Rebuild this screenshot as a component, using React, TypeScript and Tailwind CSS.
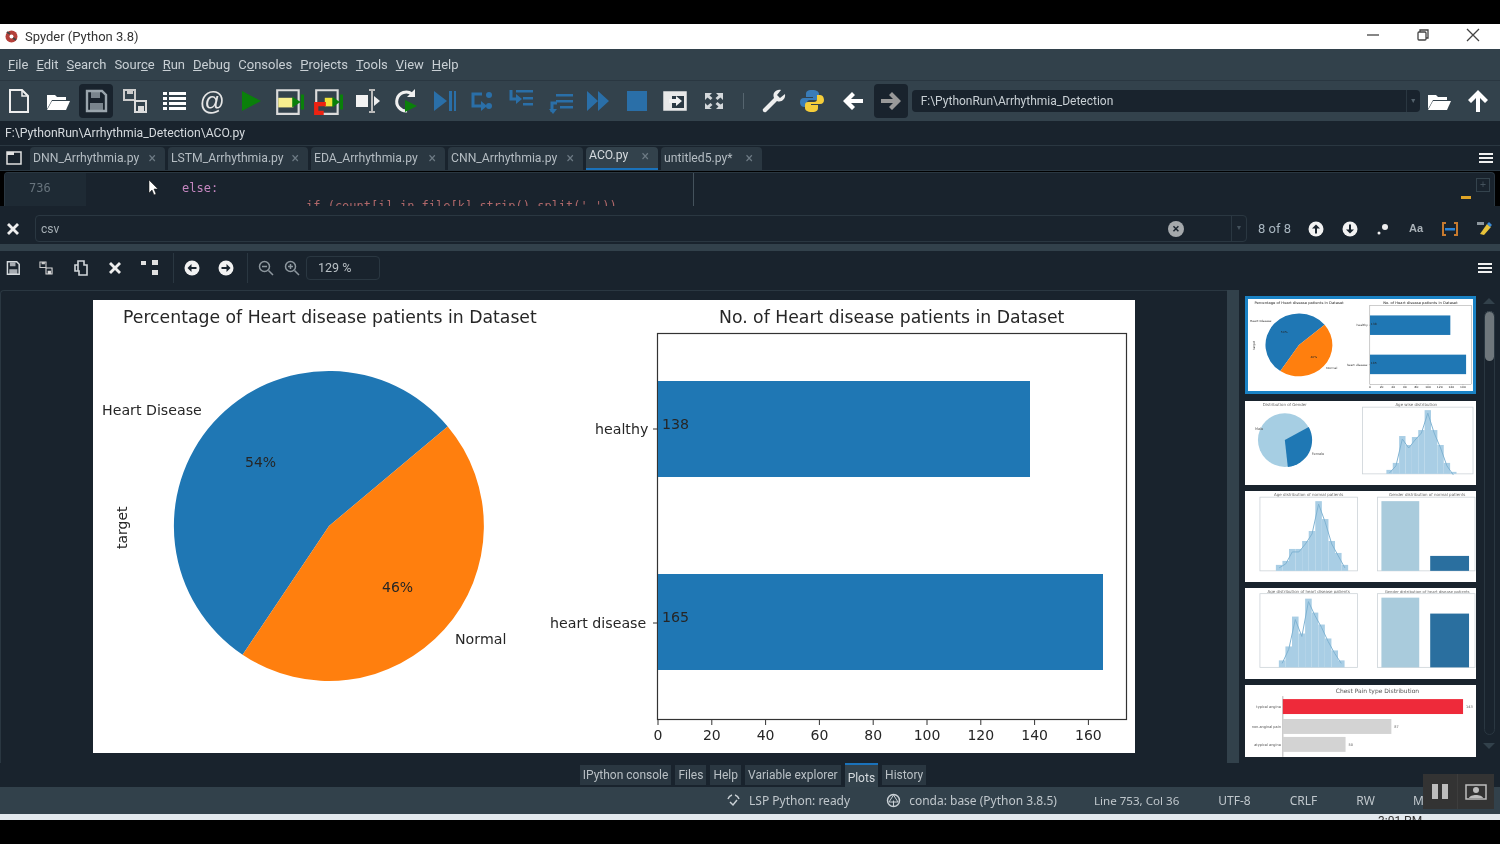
import React from 'react';

const tabs = [
  { name: 'DNN_Arrhythmia.py', w: 'w-[135px]' },
  { name: 'LSTM_Arrhythmia.py', w: 'w-[140px]' },
  { name: 'EDA_Arrhythmia.py', w: 'w-[134px]' },
  { name: 'CNN_Arrhythmia.py', w: 'w-[135px]' },
  { name: 'ACO.py', w: 'w-[72px]', active: true },
  { name: 'untitled5.py*', w: 'w-[101px]' },
];

const menus = [
  ['', 'F', 'ile'],
  ['', 'E', 'dit'],
  ['', 'S', 'earch'],
  ['Sour', 'c', 'e'],
  ['', 'R', 'un'],
  ['', 'D', 'ebug'],
  ['C', 'o', 'nsoles'],
  ['', 'P', 'rojects'],
  ['', 'T', 'ools'],
  ['', 'V', 'iew'],
  ['', 'H', 'elp'],
];

const Svg = ({ children, size = 28, viewBox = '0 0 28 28' }: { children: React.ReactNode; size?: number; viewBox?: string }) => (
  <svg width={size} height={size} viewBox={viewBox} fill="none">
    {children}
  </svg>
);

const FolderOpen = () => (
  <Svg>
    <path d="M3 8h8l2 2h9v3H8L3 22z" fill="#fff" />
    <path d="M8 14h18l-4 9H3z" fill="#fff" />
  </Svg>
);
const NewFile = () => (
  <Svg>
    <path d="M5 3h12l6 6v16H5z" stroke="#eee" strokeWidth="2" />
    <path d="M17 3v6h6" stroke="#eee" strokeWidth="1.500" />
  </Svg>
);
const Save = ({ color = '#9aa5ad' }: { color?: string }) => (
  <Svg>
    <path d="M5 4h15l4 4v16H5z" stroke={color} strokeWidth="2.400" />
    <path d="M9 5h9v6H9zM8 16h13v8H8z" fill={color} opacity="0.75" />
  </Svg>
);
const SaveAll = () => (
  <Svg>
    <path d="M3 3h11v10H3z" stroke="#ccc" strokeWidth="2" />
    <path d="M6 3h6v4H6z" fill="#ccc" />
    <path d="M14 14h11v11H14z" stroke="#ddd" strokeWidth="2" />
    <path d="M17 19h6v6h-6z" fill="#ddd" />
  </Svg>
);
const ListIcon = () => (
  <Svg>
    <path d="M3 5h4v3H3zM9 5h17v3H9zM3 10h4v3H3zM9 10h17v3H9zM3 15h4v3H3zM9 15h17v3H9zM3 20h4v3H3zM9 20h17v3H9z" fill="#fff" />
  </Svg>
);
const AtIcon = () => <span className="font-['Liberation_Sans',sans-serif] text-[25px] leading-none text-[#e6e6e6]">@</span>;
const Run = () => (
  <Svg>
    <path d="M5 4l19 10L5 24z" fill="#0a800a" />
  </Svg>
);
const RunCell = () => (
  <Svg size={30} viewBox="2 0 28 28">
    <path d="M5 4h20v22H5z" stroke="#dcdcdc" strokeWidth="2" />
    <path d="M6 11h14v9H6z" fill="#f7ee8e" />
    <path d="M19 10l8 5-8 5zM27 8h3v14h-3z" fill="#0a800a" />
  </Svg>
);
const RunCellAdv = () => (
  <Svg size={30} viewBox="2 0 28 28">
    <path d="M5 4h20v22H5z" stroke="#dcdcdc" strokeWidth="2" />
    <path d="M13 11h8v8h-8z" fill="#f0e33a" />
    <path d="M20 10l7 5-7 5zM27 8h3v14h-3z" fill="#0a800a" />
    <path d="M14 17H5v8h7" stroke="#ee2211" strokeWidth="4" />
  </Svg>
);
const RunSelection = () => (
  <Svg>
    <path d="M3 8h12v12H3z" fill="#f2f2f2" />
    <path d="M19 3v22M16 3h6M16 25h6" stroke="#bbb" strokeWidth="2" />
    <path d="M21 9l6 5-6 5z" fill="#eee" />
  </Svg>
);
const Reload = () => (
  <Svg>
    <path d="M21 7a9.500 9.500 0 1 0-5 17" stroke="#f0f0f0" strokeWidth="3" />
    <path d="M24 2v8h-8z" fill="#f0f0f0" />
    <path d="M14 13l12 6-12 6z" fill="#0a800a" />
  </Svg>
);
const DebugStep = () => (
  <Svg>
    <path d="M4 4l13 10L4 24z" fill="#2a6fa8" />
    <path d="M19 4h3v20h-3zM24 4h2v20h-2z" fill="#2a6fa8" />
  </Svg>
);
const StepOver = () => (
  <Svg>
    <path d="M14 7H5v12h9" stroke="#2a6fa8" strokeWidth="3" />
    <path d="M13 14l6 5-6 5z" fill="#2a6fa8" />
    <circle cx="21" cy="8" r="3" fill="#2a6fa8" />
    <circle cx="21" cy="19" r="3" fill="#2a6fa8" />
  </Svg>
);
const StepIn = () => (
  <Svg>
    <path d="M4 3v9h6" stroke="#2a6fa8" strokeWidth="3" />
    <path d="M9 7l6 5-6 5z" fill="#2a6fa8" />
    <path d="M9 3h17v2.500H9zM16 10h10v2.500H16zM16 16h10v2.500H16z" fill="#2a6fa8" />
  </Svg>
);
const StepOut = () => (
  <Svg>
    <path d="M6 25v-9h5" stroke="#2a6fa8" strokeWidth="3" />
    <path d="M3 22l4 5 4-5z" fill="#2a6fa8" />
    <path d="M10 7h17v2.500H10zM10 13h17v2.500H10zM14 19h13v2.500H14z" fill="#2a6fa8" />
  </Svg>
);
const Continue = () => (
  <Svg>
    <path d="M3 4l11 10L3 24zM14 4l11 10-11 10z" fill="#2a6fa8" />
  </Svg>
);
const Stop = () => (
  <Svg>
    <path d="M4 4h20v20H4z" fill="#2a6fa8" />
  </Svg>
);
const Maximize = () => (
  <Svg>
    <path d="M3 5h22v18H3z" fill="#e8e8e8" stroke="#e8e8e8" strokeWidth="1.500" />
    <path d="M11 9h12v12H11z" fill="#2b3943" />
    <path d="M8 12h7V9l6 5-6 5v-3H8z" fill="#f2f2f2" />
  </Svg>
);
const Fullscreen = () => (
  <Svg>
    <path d="M5 6h7l-2.500 2.500 3 2.500-2 2-3-2.500L5 13zM23 6v7l-2.500-2.500-3 2.500-2-2 3-2.500L16 6zM5 22v-6l2.500 2.500 3-2.500 2 2-3 2.500L12 22zM23 22h-7l2.500-2.500-3-2.500 2-2 3 2.500L23 16z" fill="#d4d8db" />
  </Svg>
);
const Wrench = () => (
  <Svg>
    <path d="M25 7l-5 4-3-3 4-5c-5-1-9 3-7 8L3 22c-1 2 1 4 3 3l11-11c4 2 9-2 8-7z" fill="#eee" />
  </Svg>
);
const PythonLogo = () => (
  <Svg>
    <path d="M14 3c-5 0-6 2-6 4v3h7v1H6c-3 0-4 2-4 4s1 5 4 5h3v-4c0-2 1-3 3-3h6c2 0 3-1 3-3V7c0-2-2-4-7-4z" fill="#3a7cb8" />
    <path d="M14 25c5 0 6-2 6-4v-3h-7v-1h9c3 0 4-2 4-4s-1-5-4-5h-3v4c0 2-1 3-3 3H10c-2 0-3 1-3 3v3c0 2 2 4 7 4z" fill="#f5cd3a" />
  </Svg>
);
const ArrowLeft = () => (
  <Svg>
    <path d="M13 5l3 3-4 4h12v4H12l4 4-3 3-9-9z" fill="#fff" />
  </Svg>
);
const ArrowRight = () => (
  <Svg>
    <path d="M15 5l-3 3 4 4H4v4h12l-4 4 3 3 9-9z" fill="#999" />
  </Svg>
);
const ArrowUp = () => (
  <Svg>
    <path d="M14 3l10 10-3 3-5-5v14h-4V11l-5 5-3-3z" fill="#fff" />
  </Svg>
);

const toolbarIcons: { icon: React.ReactNode; active?: boolean }[] = [
  { icon: <NewFile /> },
  { icon: <FolderOpen /> },
  { icon: <Save />, active: true },
  { icon: <SaveAll /> },
  { icon: <ListIcon /> },
  { icon: <AtIcon /> },
  { icon: <Run /> },
  { icon: <RunCell /> },
  { icon: <RunCellAdv /> },
  { icon: <RunSelection /> },
  { icon: <Reload /> },
  { icon: <DebugStep /> },
  { icon: <StepOver /> },
  { icon: <StepIn /> },
  { icon: <StepOut /> },
  { icon: <Continue /> },
  { icon: <Stop /> },
  { icon: <Maximize /> },
  { icon: <Fullscreen /> },
];

const ToolBtn = ({ children, active }: { children: React.ReactNode; active?: boolean }) => (
  <div className={`flex h-[34px] w-[34px] mx-[2.300px] shrink-0 items-center justify-center rounded ${active ? 'bg-[#19232d]' : ''}`}>
    {children}
  </div>
);

const Hamburger = () => (
  <svg width="16" height="14" viewBox="0 0 16 14">
    <path d="M1 2h14v2H1zM1 6h14v2H1zM1 10h14v2H1z" fill="#f0f0f0" />
  </svg>
);

const SmallIcon = ({ d, fill = '#eee', stroke }: { d: string; fill?: string; stroke?: string }) => (
  <svg width="18" height="18" viewBox="0 0 18 18">
    <path d={d} fill={stroke ? 'none' : fill} stroke={stroke} strokeWidth={stroke ? 1.6 : 0} />
  </svg>
);

const Cross = () => <SmallIcon d="M3 5l2-2 4 4 4-4 2 2-4 4 4 4-2 2-4-4-4 4-2-2 4-4z" />;

const CircleArrow = ({ dir }: { dir: 'left' | 'right' | 'up' | 'down' }) => {
  const rot = { left: 180, right: 0, up: -90, down: 90 }[dir];
  return (
    <svg width="16" height="16" viewBox="0 0 16 16">
      <circle cx="8" cy="8" r="7.500" fill="#f2f2f2" />
      <path d="M3.500 7h5V4l4 4-4 4V9h-5z" fill="#19232d" transform={`rotate(${rot} 8 8)`} />
    </svg>
  );
};

const Zoom = ({ plus }: { plus?: boolean }) => (
  <svg width="16" height="16" viewBox="0 0 16 16" fill="none" stroke="#8d979e" strokeWidth="1.500">
    <circle cx="6.500" cy="6.500" r="5" />
    <path d="M10.500 10.500l4.500 4.500M4 6.500h5" />
    {plus && <path d="M6.500 4v5" />}
  </svg>
);

// main figure: pie on the left, horizontal bars on the right
const PlotOne = ({ className }: { className: string }) => {
  const ticks = [0, 20, 40, 60, 80, 100, 120, 140, 160];
  return (
    <svg viewBox="0 0 1042 453" preserveAspectRatio="none" className={className} fontFamily="'DejaVu Sans', sans-serif" fill="#262626">
      <rect width="1042" height="453" fill="#fff" />
      <text x="30" y="23" fontSize="17.250">Percentage of Heart disease patients in Dataset</text>
      <path d="M236 226L354.700 126.400A155 155 0 1 0 149.600 354.700Z" fill="#1f77b4" />
      <path d="M236 226L354.700 126.400A155 155 0 0 1 149.600 354.700Z" fill="#ff7f0e" />
      <text x="9" y="115" fontSize="14.200">Heart Disease</text>
      <text x="362" y="344" fontSize="14.200">Normal</text>
      <text x="152" y="167" fontSize="14">54%</text>
      <text x="289" y="292" fontSize="14">46%</text>
      <text transform="translate(34 249) rotate(-90)" fontSize="14">target</text>
      <text x="626" y="23" fontSize="17.250">No. of Heart disease patients in Dataset</text>
      <rect x="564.500" y="33.500" width="469" height="386" fill="none" stroke="#333" strokeWidth="1.200" />
      <rect x="565" y="81" width="372" height="96" fill="#1f77b4" />
      <rect x="565" y="274" width="445" height="96" fill="#1f77b4" />
      <text x="569" y="129" fontSize="14.200">138</text>
      <text x="569" y="322" fontSize="14.200">165</text>
      <text x="502" y="134" fontSize="14.200">healthy</text>
      <text x="457" y="328" fontSize="14.200">heart disease</text>
      <path d="M560 129h5M560 323h5" stroke="#333" />
      {ticks.map((t, i) => {
        const x = 565 + i * 53.8;
        return (
          <g key={t}>
            <path d={`M${x} 420v5`} stroke="#333" />
            <text x={x} y="440" fontSize="14" textAnchor="middle">{t}</text>
          </g>
        );
      })}
    </svg>
  );
};

const kdeBars = (x0: number, w: number, base: number, tops: number[]) =>
  tops.map((t, i) => <rect key={i} x={x0 + i * w} y={t} width={w} height={base - t} fill="#a9cee5" />);

const kdeLine = (x0: number, w: number, tops: number[]) =>
  tops.map((t, i) => `${i ? 'L' : 'M'}${x0 + i * w + w / 2} ${t}`).join(' ');

const Thumb = ({ h, children, selected }: { h: string; children: React.ReactNode; selected?: boolean }) => (
  <div className={`w-[231px] shrink-0 bg-white ${h} ${selected ? 'border-[3px] border-[#1a82c4]' : ''}`}>
    {children}
  </div>
);

const Hist = ({ x, w, base, top, tops, bw, x0, title, titleX, height }: { x: number; w: number; base: number; top: number; tops: number[]; bw: number; x0: number; title: string; titleX: number; height: number }) => (
  <g>
    <text x={titleX} y={top - 1} fontSize="4" textAnchor="middle" fill="#666">{title}</text>
    <rect x={x} y={top} width={w} height={height} fill="none" stroke="#ccd3d8" strokeWidth="0.800" />
    {kdeBars(x0, bw, base, tops)}
    <path d={kdeLine(x0, bw, tops.map((t) => t + 3))} fill="none" stroke="#7fb2d2" strokeWidth="1" />
  </g>
);

const ThumbTwo = () => (
  <svg viewBox="0 0 232 84" className="block h-full w-full" fontFamily="'DejaVu Sans', sans-serif">
    <text x="40" y="5" fontSize="4" textAnchor="middle" fill="#666">Distribution of Gender</text>
    <circle cx="40" cy="39" r="27" fill="#a6cee3" />
    <path d="M40 39L64 26A27 27 0 0 1 43 66Z" fill="#1f78b4" />
    <text x="10" y="29" fontSize="3.500" fill="#555">Male</text>
    <text x="67" y="54" fontSize="3.500" fill="#555">Female</text>
    <Hist x={118} w={111} base={73} top={6} height={67} bw={6.4} x0={142} tops={[69, 62, 35, 44, 36, 29, 9, 29, 44, 62, 71]} title="Age wise distribution" titleX={172} />
  </svg>
);

const ThumbThree = () => (
  <svg viewBox="0 0 232 91" className="block h-full w-full" fontFamily="'DejaVu Sans', sans-serif">
    <Hist x={15} w={98} base={80} top={6} height={74} bw={6.6} x0={31} tops={[74, 70, 58, 58, 50, 40, 10, 28, 50, 62, 74]} title="Age distribution of normal patients" titleX={64} />
    <text x={183} y={5} fontSize="4" textAnchor="middle" fill="#666">Gender distribution of normal patients</text>
    <rect x="133" y="6" width="98" height="74" fill="none" stroke="#ccd3d8" strokeWidth="0.800" />
    <rect x="137" y="10" width="38" height="70" fill="#a9cbdc" />
    <rect x="186" y="65" width="39" height="15" fill="#2a6f9f" />
  </svg>
);

const ThumbFour = () => (
  <svg viewBox="0 0 232 90" className="block h-full w-full" fontFamily="'DejaVu Sans', sans-serif">
    <Hist x={15} w={98} base={79} top={5} height={74} bw={6.6} x0={34} tops={[72, 58, 28, 45, 10, 24, 36, 50, 62, 72]} title="Age distribution of heart disease patients" titleX={64} />
    <text x={183} y={4} fontSize="3.800" textAnchor="middle" fill="#666">Gender distribution of heart disease patients</text>
    <rect x="133" y="5" width="98" height="74" fill="none" stroke="#ccd3d8" strokeWidth="0.800" />
    <rect x="137" y="9" width="38" height="70" fill="#a9cbdc" />
    <rect x="186" y="25" width="39" height="54" fill="#2a6f9f" />
  </svg>
);

const ThumbFive = () => (
  <svg viewBox="0 0 232 72" className="block h-full w-full" fontFamily="'DejaVu Sans', sans-serif">
    <text x="133" y="8" fontSize="6" textAnchor="middle" fill="#555">Chest Pain type Distribution</text>
    <path d="M38 11v61" stroke="#666" strokeWidth="0.500" />
    <rect x="38" y="14" width="181" height="15" fill="#ee2a3a" />
    <rect x="38" y="34" width="109" height="15" fill="#d3d3d3" />
    <rect x="38" y="52" width="63" height="15" fill="#d3d3d3" />
    <text x="36" y="23" fontSize="3.500" textAnchor="end" fill="#555">typical angina</text>
    <text x="36" y="43" fontSize="3.500" textAnchor="end" fill="#555">non-anginal pain</text>
    <text x="36" y="61" fontSize="3.500" textAnchor="end" fill="#555">atypical angina</text>
    <text x="222" y="23" fontSize="3.500" fill="#555">143</text>
    <text x="150" y="43" fontSize="3.500" fill="#555">87</text>
    <text x="104" y="61" fontSize="3.500" fill="#555">50</text>
  </svg>
);

const bottomTabs = ['IPython console', 'Files', 'Help', 'Variable explorer', 'Plots', 'History'];

const App = () => {
  return (
    <div className="relative flex h-[844px] w-[1500px] flex-col overflow-hidden bg-black font-['Roboto',sans-serif] text-[13px] text-[#d5dade] blur-[0.4px]">
      <div className="h-[24px] shrink-0 bg-black" />

      {/* title bar */}
      <div className="flex h-[25px] shrink-0 items-center bg-white text-[#333]">
        <svg className="ml-[4px]" width="15" height="15" viewBox="0 0 15 15">
          <circle cx="7.500" cy="7.500" r="6" fill="#b5403a" />
          <circle cx="7.500" cy="7.500" r="2" fill="#fff" />
          <path d="M3 3l3 2M12 11l-3-2" stroke="#444" strokeWidth="2" />
        </svg>
        <span className="ml-[6px] text-[13px]">Spyder (Python 3.8)</span>
        <div className="ml-auto mr-[20px] flex -translate-y-[2px] items-center gap-[36px]">
          <svg width="14" height="14" viewBox="0 0 14 14"><path d="M1 7h12" stroke="#444" strokeWidth="1.300" /></svg>
          <svg width="14" height="14" viewBox="0 0 14 14" fill="none" stroke="#444" strokeWidth="1.300"><rect x="2" y="4" width="8" height="8" rx="1" /><path d="M4 4V2h8v8h-2" /></svg>
          <svg width="14" height="14" viewBox="0 0 14 14"><path d="M1 1l12 12M13 1L1 13" stroke="#444" strokeWidth="1.300" /></svg>
        </div>
      </div>

      {/* menu bar */}
      <div className="flex h-[32px] shrink-0 items-center gap-[8px] border-b border-[#2a3741] bg-[#32414b] pl-[8px] text-[13px] text-[#c9d0d5]">
        {menus.map((m) => (
          <span key={m.join('')}>
            {m[0]}<u>{m[1]}</u>{m[2]}
          </span>
        ))}
      </div>

      {/* main toolbar */}
      <div className="flex h-[40px] shrink-0 items-center bg-[#33424c]">
        {toolbarIcons.map((t, i) => (
          <ToolBtn key={i} active={t.active}>{t.icon}</ToolBtn>
        ))}
        <div className="ml-[10px] mr-[10px] h-[16px] w-px bg-[#56656f]" />
        <ToolBtn><Wrench /></ToolBtn>
        <ToolBtn><PythonLogo /></ToolBtn>
        <div className="ml-[2px]"><ToolBtn><ArrowLeft /></ToolBtn></div>
        <ToolBtn active><ArrowRight /></ToolBtn>
        <div className="ml-[1px] flex h-[22px] w-[508px] shrink-0 items-center rounded-sm bg-[#19232d] pl-[9px] text-[12px] text-[#c9d0d5]">
          F:\PythonRun\Arrhythmia_Detection
          <div className="ml-auto flex h-full w-[14px] items-center justify-center border-l border-[#2a3741] text-[7px] text-[#54626c]">▼</div>
        </div>
        <div className="flex"><ToolBtn><FolderOpen /></ToolBtn><ToolBtn><ArrowUp /></ToolBtn></div>
      </div>

      {/* file path */}
      <div className="flex h-[24px] shrink-0 items-center bg-[#19232d] pl-[5px] text-[12.200px] text-[#d5dade]">
        F:\PythonRun\Arrhythmia_Detection\ACO.py
      </div>

      {/* editor tabs */}
      <div className="flex h-[26px] shrink-0 items-center border-t border-b border-[#2a3741] bg-[#19232d]">
        <div className="flex w-[27px] justify-center">
          <svg width="16" height="14" viewBox="0 0 16 14" fill="none"><path d="M1 1h14v12H1z" stroke="#e0e0e0" strokeWidth="1.500" /><path d="M1 1h7v3H1z" fill="#e0e0e0" /></svg>
        </div>
        <div className="ml-[3px] flex gap-[3px]">
          {tabs.map((t) => (
            <div
              key={t.name}
              className={`flex h-[23px] items-center justify-between rounded-t-sm pl-[3px] pr-[9px] text-[12.200px] ${t.w} ${t.active ? 'border-b-2 border-[#1a72bb] bg-[#33424c] pb-[3px] text-[#d5dade]' : 'bg-[#2a3741] text-[#b4bcc2]'}`}
            >
              <span>{t.name}</span>
              <span className="text-[14px] leading-none text-[#6d7a84]">×</span>
            </div>
          ))}
        </div>
        <div className="ml-auto mr-[6px]"><Hamburger /></div>
      </div>

      {/* editor, one and a bit lines visible */}
      <div className="mt-[1px] ml-[4px] mr-[5px] flex h-[34px] shrink-0 overflow-hidden rounded-t border-l border-r border-t border-[#2a3741] bg-[#19232d] font-['DejaVu_Sans_Mono',monospace] text-[12px] leading-[18px]">
        <div className="h-full w-[81px] shrink-0 bg-[#1e2a34] pl-[24px] pt-[6px] text-[#68747d]">736</div>
        <div className="h-full w-[608px] shrink-0 whitespace-nowrap border-r border-[#44525c] pl-[96px] pt-[6px]">
          <div className="text-[#c586c0]">else:</div>
          <div className="pl-[124px] text-[#b0686a]">if (count[i] in file[k].strip().split(','))</div>
        </div>
        <div className="ml-auto mr-[4px] flex items-start gap-[5px] pt-[5px]">
          <div className="mt-[18px] h-[3px] w-[10px] bg-[#e0a526]" />
          <div className="flex h-[14px] w-[14px] items-center justify-center border border-[#34434d] text-[10px] leading-none text-[#44525c]">+</div>
        </div>
      </div>

      {/* find bar */}
      <div className="flex h-[38px] shrink-0 items-center bg-[#19232d] pt-[7px]">
        <div className="ml-[4px]"><Cross /></div>
        <div className="ml-[13px] flex h-[27px] w-[1212px] shrink-0 items-center rounded-[4px] border border-[#2a3741] pl-[5px] text-[12px] text-[#a6afb5]">
          csv
          <div className="ml-auto mr-[47px] flex h-[16px] w-[16px] items-center justify-center rounded-full bg-[#a5a9ac] text-[13px] font-bold leading-none text-[#19232d]">×</div>
          <div className="flex h-full w-[15px] items-center justify-center border-l border-[#2a3741] text-[7px] text-[#44525c]">▼</div>
        </div>
        <span className="ml-[11px] w-[32px] shrink-0 whitespace-nowrap text-[13px] text-[#a9b6c0]">8 of 8</span>
        <div className="ml-[18px]"><CircleArrow dir="up" /></div>
        <div className="ml-[18px]"><CircleArrow dir="down" /></div>
        <svg className="ml-[19px]" width="12" height="12" viewBox="0 0 12 12"><circle cx="8" cy="4" r="3" fill="#eee" /><circle cx="2" cy="10" r="1.500" fill="#eee" /></svg>
        <span className="ml-[20px] font-['Liberation_Sans',sans-serif] text-[11px] font-bold text-[#aab2b8]">Aa</span>
        <svg className="ml-[18px]" width="18" height="14" viewBox="0 0 18 14" fill="none"><path d="M5 1H2v12h3M13 1h3v12h-3" stroke="#c77a2e" strokeWidth="2" /><path d="M4 6h10v2.500H4z" fill="#2a84d8" /></svg>
        <svg className="ml-[17px]" width="16" height="16" viewBox="0 0 16 16"><path d="M1 1h7v3H1z" fill="#8d979e" /><path d="M11 3l4 3-7 8-4-1z" fill="#e8c23a" /><path d="M13 1l3 3-2 2-3-3z" fill="#3b8ad6" /></svg>
      </div>

      <div className="h-[7px] shrink-0 bg-[#32414b]" />

      {/* plots toolbar */}
      <div className="flex h-[39px] shrink-0 items-center bg-[#19232d] pb-[5px]">
        <div className="ml-[-1px] flex scale-[0.62] items-center justify-center"><Save color="#d5dade" /></div>
        <div className="ml-[5px] flex scale-[0.55] items-center justify-center"><SaveAll /></div>
        <div className="ml-[12px]"><SmallIcon d="M6 2h6v4h3v10H7v-4H3V6h3zM6 6v6" stroke="#d0d5d9" /></div>
        <div className="ml-[16px]"><Cross /></div>
        <div className="ml-[16px]">
          <svg width="19" height="18" viewBox="0 0 19 18"><path d="M1 2h5v4H1zM12 1h6v5h-6zM12 11h6v5h-6z" fill="#e0e0e0" /></svg>
        </div>
        <div className="ml-[14px] h-[30px] w-px bg-[#2a3741]" />
        <div className="ml-[10px]"><CircleArrow dir="left" /></div>
        <div className="ml-[18px]"><CircleArrow dir="right" /></div>
        <div className="ml-[13px] h-[30px] w-px bg-[#2a3741]" />
        <div className="ml-[10px]"><Zoom /></div>
        <div className="ml-[10px]"><Zoom plus /></div>
        <div className="ml-[6px] flex h-[24px] w-[74px] shrink-0 items-center rounded border border-[#2a3741] pl-[11px] text-[12.500px] text-[#b9c0c5]">129 %</div>
        <div className="ml-auto mr-[7px]"><Hamburger /></div>
      </div>

      {/* plots pane */}
      <div className="flex h-[473px] shrink-0 bg-[#19232d]">
        <div className="h-full w-[1227px] shrink-0 rounded-tl border-t border-l border-[#2a3741] pl-[92px] pt-[9px]">
          <PlotOne className="block h-[453px] w-[1042px]" />
        </div>
        <div className="h-full w-[12px] shrink-0 bg-[#32414b]" />
        <div className="flex h-full flex-1">
          <div className="flex w-[243px] shrink-0 flex-col gap-[6px] pl-[6px] pt-[6px]">
            <Thumb h="mb-[1px] h-[98px]" selected>
              <PlotOne className="block h-full w-full" />
            </Thumb>
            <Thumb h="h-[84px]"><ThumbTwo /></Thumb>
            <Thumb h="h-[91px]"><ThumbThree /></Thumb>
            <Thumb h="h-[91px]"><ThumbFour /></Thumb>
            <Thumb h="h-[72px]"><ThumbFive /></Thumb>
          </div>
          <div className="flex w-[14px] shrink-0 flex-col items-center">
            <svg className="mt-[8px]" width="12" height="6" viewBox="0 0 12 6"><path d="M6 0l6 6H0z" fill="#32414b" /></svg>
            <div className="mt-[7px] h-[50px] w-[9px] rounded-full bg-[#6f777c]" />
            <div className="mt-[-50px] h-[424px] w-[11px] rounded-full border border-[#2a3741]" />
            <svg className="mt-[8px]" width="12" height="6" viewBox="0 0 12 6"><path d="M0 0h12L6 6z" fill="#32414b" /></svg>
          </div>
        </div>
      </div>

      {/* pane tabs */}
      <div className="flex h-[24px] shrink-0 items-end justify-center gap-[4px] bg-[#19232d] pl-[6px] text-[12px]">
        {bottomTabs.map((t) => (
          <div
            key={t}
            className={`flex items-center px-[3px] ${t === 'Plots' ? 'h-[24px] border-t-2 border-[#1a72bb] bg-[#33424c] pt-[3px] text-[#d5dade]' : 'mb-[2px] h-[20px] bg-[#2a3741] text-[#b9c0c5]'}`}
          >
            {t}
          </div>
        ))}
      </div>

      {/* status bar */}
      <div className="flex h-[27px] shrink-0 items-center overflow-hidden bg-[#32414b] pl-[726px] font-['Noto_Sans',sans-serif] text-[12px] text-[#c0c7cc]">
        <svg width="15" height="15" viewBox="0 0 15 15" fill="none" stroke="#c9d0d5" strokeWidth="1.500"><path d="M2 6a6 6 0 0 1 4-4M9 2a6 6 0 0 1 4 4M4 9l3 3 4-5" /></svg>
        <span className="ml-[8px] shrink-0">LSP Python: ready</span>
        <svg className="ml-[36px]" width="15" height="15" viewBox="0 0 15 15" fill="none" stroke="#c9d0d5" strokeWidth="1.500"><circle cx="7.500" cy="7.500" r="6" /><path d="M7.500 2L3 9h9zM7.500 7.500v6" strokeWidth="1" /></svg>
        <span className="ml-[8px] shrink-0">conda: base (Python 3.8.5)</span>
        <span className="ml-[37px] shrink-0 text-[11.600px]">Line 753, Col 36</span>
        <span className="ml-[39px] shrink-0">UTF-8</span>
        <span className="ml-[39px] shrink-0">CRLF</span>
        <span className="ml-[39px] shrink-0">RW</span>
        <span className="ml-[38px] shrink-0">Mem 45%</span>
      </div>

      {/* taskbar peeking through */}
      <div className="h-[6px] shrink-0 overflow-hidden bg-[#e3e9ee] pl-[1378px] text-[12px] leading-[14px] text-[#333]">3:01 PM</div>

      <div className="flex-1 bg-black" />

      {/* recorder overlay */}
      <div className="absolute left-[1423px] top-[774px] flex h-[35px] w-[71px] divide-x divide-[#3d3d3d] bg-[#333]">
        <div className="flex w-[35px] items-center justify-center gap-[4px]">
          <div className="h-[15px] w-[6px] bg-[#bdbdbd]" />
          <div className="h-[15px] w-[6px] bg-[#bdbdbd]" />
        </div>
        <div className="flex flex-1 items-center justify-center">
          <svg width="22" height="16" viewBox="0 0 22 16"><path d="M1 1h20v14H1z" fill="none" stroke="#bdbdbd" strokeWidth="1.500" /><circle cx="11" cy="6" r="3" fill="#bdbdbd" /><path d="M4 14c1-4 13-4 14 0z" fill="#bdbdbd" /></svg>
        </div>
      </div>

      {/* mouse pointer */}
      <svg className="absolute left-[148px] top-[179px]" width="12" height="18" viewBox="0 0 12 18">
        <path d="M1 1v13l3-3 2 5 2-1-2-5h4z" fill="#fff" stroke="#111" strokeWidth="0.500" />
      </svg>
    </div>
  );
};

export default App;
